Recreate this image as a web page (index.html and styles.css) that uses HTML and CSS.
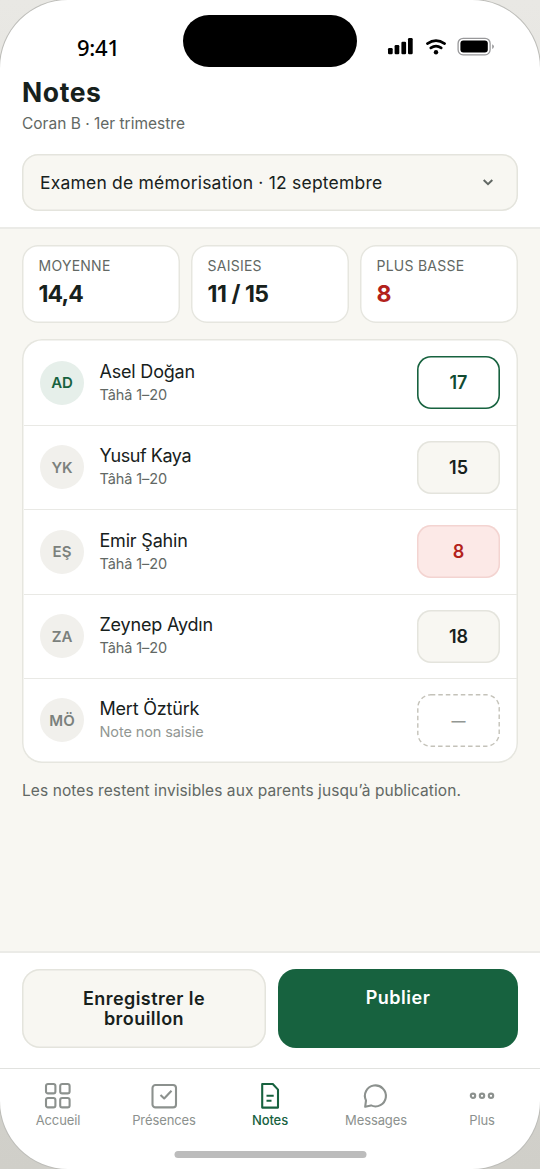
FILE: index.html
```html
<!DOCTYPE html>
<html lang="fr">
<head>
<meta charset="utf-8">
<title>Notes</title>
<link rel="stylesheet" href="styles.css">
</head>
<body>
<div class="phone">
  <header class="header">
    <div class="status">
      <span class="time">9:41</span>
      <div class="island"></div>
      <svg class="status-icons" width="108" height="20" viewBox="0 0 108 20">
        <rect x="1" y="11" width="4.7" height="6.3" rx="1.2"/><rect x="7.6" y="8" width="4.7" height="9.3" rx="1.2"/><rect x="14.4" y="4.7" width="4.7" height="12.6" rx="1.2"/><rect x="21" y="1" width="4.7" height="16.3" rx="1.2"/>
        <path class="wave" d="M40.4 6.6Q49 .6 57.6 6.6M43.8 10.9Q49 7.2 54.2 10.9"/><circle cx="49" cy="15.2" r="2.2"/>
        <rect class="shell" x="71.1" y="1.3" width="32" height="16.5" rx="5"/><rect x="73.4" y="3.5" width="27.4" height="12.1" rx="3"/><path class="cap" d="M105.2 7.2q1.7.6 1.7 2.4t-1.7 2.4z"/>
      </svg>
    </div>
    <h1 class="title">Notes</h1>
    <p class="subtitle">Coran B · 1er trimestre</p>
    <div class="select"><span>Examen de mémorisation · 12 septembre</span>
      <svg width="12" height="12" viewBox="0 0 12 12"><path d="M1.7 4l4.3 4.2L10.3 4"/></svg></div>
  </header>
  <main class="main">
    <section class="stats">
      <div class="stat"><span class="stat-label">MOYENNE</span><b class="stat-value">14,4</b></div>
      <div class="stat"><span class="stat-label">SAISIES</span><b class="stat-value count">11 / 15</b></div>
      <div class="stat"><span class="stat-label">PLUS BASSE</span><b class="stat-value low">8</b></div>
    </section>
    <section class="list">
      <div class="row"><span class="avatar active">AD</span><div class="who"><span class="name">Asel Doğan</span><span class="detail">Tâhâ 1–20</span></div><span class="grade selected">17</span></div>
      <div class="row"><span class="avatar">YK</span><div class="who"><span class="name tight">Yusuf Kaya</span><span class="detail">Tâhâ 1–20</span></div><span class="grade">15</span></div>
      <div class="row"><span class="avatar">EŞ</span><div class="who"><span class="name">Emir Şahin</span><span class="detail">Tâhâ 1–20</span></div><span class="grade bad">8</span></div>
      <div class="row"><span class="avatar">ZA</span><div class="who"><span class="name">Zeynep Aydın</span><span class="detail">Tâhâ 1–20</span></div><span class="grade">18</span></div>
      <div class="row"><span class="avatar">MÖ</span><div class="who"><span class="name">Mert Öztürk</span><span class="detail missing">Note non saisie</span></div><span class="grade empty"><svg class="dashes" width="83" height="53"><rect x=".8" y=".8" width="81.4" height="51.4" rx="13"/></svg>—</span></div>
    </section>
    <p class="hint">Les notes restent invisibles aux parents jusqu’à publication.</p>
  </main>
  <div class="actions">
    <div class="btn draft">Enregistrer le<br>brouillon</div>
    <div class="btn publish">Publier</div>
  </div>
  <nav class="tabs">
    <div class="tab"><svg width="28" height="28" viewBox="0 0 28 28"><rect x="2" y="2" width="9.4" height="9.4" rx="2"/><rect x="16.2" y="2" width="9.4" height="9.4" rx="2"/><rect x="2" y="16" width="9.4" height="9.4" rx="2"/><rect x="16.2" y="16" width="9.4" height="9.4" rx="2"/></svg><span class="narrow">Accueil</span></div>
    <div class="tab"><svg width="28" height="28" viewBox="0 0 28 28"><rect x="2.5" y="3" width="23.5" height="22.4" rx="3"/><path d="M10.5 13l3.7 3.5 7.3-7.8"/></svg><span>Présences</span></div>
    <div class="tab current"><svg width="28" height="28" viewBox="0 0 28 28"><path d="M6.2 2h10.6l5.2 5.6v18H6.2zM10.5 13.7h7.2M10.5 18.8h5"/></svg><span>Notes</span></div>
    <div class="tab"><svg width="28" height="28" viewBox="0 0 28 28"><path d="M3.2 24.7L4 18.5A10.5 10.5 0 1 1 9 23.4z"/></svg><span>Messages</span></div>
    <div class="tab"><svg width="28" height="28" viewBox="0 0 28 28"><circle cx="5" cy="13.8" r="2.2"/><circle cx="14" cy="13.8" r="2.2"/><circle cx="23" cy="13.8" r="2.2"/></svg><span>Plus</span></div>
  </nav>
  <div class="home"></div>
</div>
</body>
</html>
```
FILE: styles.css
```css
* { box-sizing: border-box; }
body { margin: 0; background: linear-gradient(#e9e8e4, #d0cfc9); font-family: Inter, sans-serif; color: #17211c; }
h1, p { margin: 0; }
svg { display: block; flex: none; }
.phone { width: 540px; height: 1169px; border-radius: 68px; background: #fff; overflow: hidden; display: flex; flex-direction: column; box-shadow: 0 0 0 1px #bdbdb9; white-space: nowrap; }
.header { height: 229px; padding: 0 22px; border-bottom: 2px solid #ebebe7; flex: none; }
.status { height: 75.5px; padding-top: 15px; display: flex; }
.time { width: 161px; padding: 15px 0 0 55px; font: 500 22px/34px "Noto Sans", sans-serif; color: #000; letter-spacing: -.3px; }
.island { width: 174px; height: 52px; border-radius: 26px; background: #000; }
.status-icons { margin: 21.5px 0 0 30px; }
.wave { fill: none; stroke: #000; stroke-width: 2.6; stroke-linecap: round; }
.shell { fill: none; stroke: #98989a; stroke-width: 1.3; }
.cap { fill: #98989a; }
.title { font-size: 26.5px; line-height: 32px; font-weight: 700; letter-spacing: .6px; }
.subtitle { margin-top: 5.5px; font-size: 15.5px; line-height: 22px; color: #626864; }
.select { margin-top: 18.5px; height: 57px; padding: 0 24px 0 18px; box-shadow: inset 0 0 0 1.5px #e4e4dd; border-radius: 16px; background: #f8f7f2; display: flex; align-items: center; justify-content: space-between; font-size: 17.5px; letter-spacing: .2px; }
.select svg { fill: none; stroke: #626864; stroke-width: 2; }
.main { flex: 1; background: #f8f7f2; padding: 16px 22px 0; }
.stats { display: grid; grid-template-columns: repeat(3, 1fr); gap: 11px; }
.stat { height: 78px; padding: 11px 16.5px; background: #fff; box-shadow: inset 0 0 0 1.5px #e6e6df; border-radius: 16px; display: flex; flex-direction: column; }
.stat-label { font-size: 14px; line-height: 20px; color: #626864; letter-spacing: .25px; }
.stat-value { margin-top: 2.5px; font-size: 23px; line-height: 30px; letter-spacing: -.9px; }
.count { letter-spacing: -.45px; }
.low { color: #b3221b; }
.list { margin-top: 16px; padding: 2px 1.5px 1.5px; box-shadow: inset 0 0 0 1.5px #e6e6df; border-radius: 20px; background: #fff; }
.row { height: 84.5px; padding: 0 16.5px; display: flex; align-items: center; border-bottom: 1.5px solid #e9e9e5; }
.row:last-child { border: 0; height: 82.5px; }
.avatar { width: 44px; height: 44px; border-radius: 50%; background: #f1f0ec; color: #7b817d; font-size: 15px; font-weight: 600; display: flex; align-items: center; justify-content: center; }
.active { background: #e6efea; color: #17623f; }
.who { flex: 1; margin-left: 15.5px; display: flex; flex-direction: column; }
.name { font-size: 18px; line-height: 24px; letter-spacing: -.2px; }
.tight { letter-spacing: -.45px; }
.detail { font-size: 14.5px; line-height: 22px; color: #626864; letter-spacing: -.1px; }
.missing { color: #929793; letter-spacing: -.1px; }
.grade { position: relative; width: 83px; height: 53px; box-shadow: inset 0 0 0 1.5px #e4e4dd; border-radius: 14px; background: #f8f7f2; font-size: 18px; font-weight: 600; display: flex; align-items: center; justify-content: center; }
.selected { background: #fff; box-shadow: inset 0 0 0 1.6px #17623f; color: #124b32; }
.bad { background: #fce9e7; box-shadow: inset 0 0 0 1.5px #f3d4d1; color: #b3221b; }
.empty { box-shadow: none; background: #fff; color: #929793; font-weight: 600; font-size: 14px; }
.dashes { position: absolute; inset: 0; fill: none; stroke: #c4c2b9; stroke-width: 1.4; stroke-dasharray: 4.5 3; }
.hint { margin-top: 16px; font-size: 15.5px; line-height: 24px; color: #626864; letter-spacing: .08px; }
.actions { height: 117px; padding: 16px 22px 0; border-top: 2px solid #ebebe7; display: flex; gap: 12px; flex: none; }
.btn { height: 79px; border-radius: 18px; font-size: 18px; line-height: 19.5px; font-weight: 600; text-align: center; }
.draft { width: 244px; box-shadow: inset 0 0 0 1.5px #e4e4dd; background: #f8f7f2; padding-top: 20px; letter-spacing: .45px; }
.publish { width: 240px; background: #17623f; color: #fff; padding-top: 18.5px; letter-spacing: .5px; }
.tabs { height: 83px; padding: 12.5px 5px 0; border-top: 1.5px solid #e1e2df; display: grid; grid-template-columns: repeat(5, 1fr); color: #8c918e; flex: none; }
.tab { display: flex; flex-direction: column; align-items: center; font-size: 13px; line-height: 20px; letter-spacing: -.1px; }
.tab svg { fill: none; stroke: currentColor; stroke-width: 2.1; stroke-linejoin: round; }
.current { color: #17623f; font-weight: 500; }
.home { width: 192px; height: 7px; margin: 0 auto 11px; border-radius: 4px; background: #bcbcbc; flex: none; transform: translateX(.5px); }
```
